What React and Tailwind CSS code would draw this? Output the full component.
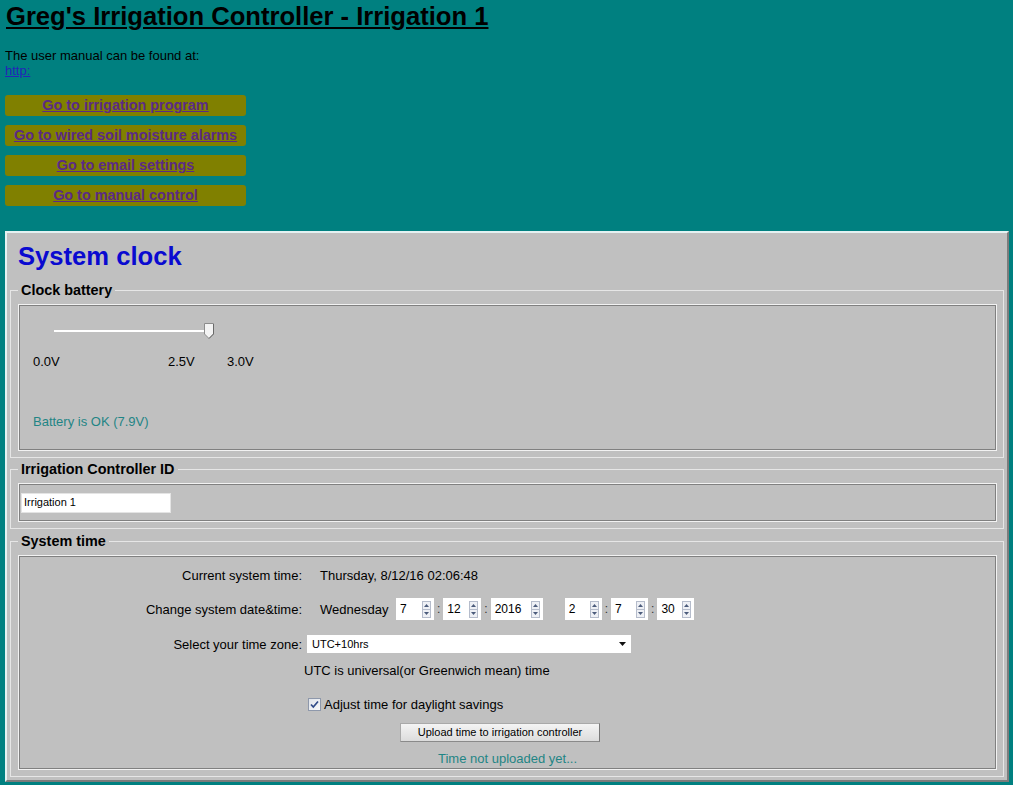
import React from 'react';

const navLinks = [
  'Go to irrigation program',
  'Go to wired soil moisture alarms',
  'Go to email settings',
  'Go to manual control',
];

const Arrow = ({ up }) => (
  <svg width="5" height="3" viewBox="0 0 5 3">
    <path d={up ? 'M2.5 0 L5 3 H0 Z' : 'M0 0 H5 L2.5 3 Z'} fill="#4b5b7b" />
  </svg>
);

const Spin = ({ value, w }) => (
  <div className={`flex h-[22px] items-center bg-white ${w}`}>
    <span className="flex-1 pl-[4px] text-[12px] leading-none text-black">{value}</span>
    <div className="mr-[3px] flex h-[17px] w-[9px] flex-col border border-[#b5bccb] bg-[#eef0f5]">
      <div className="flex flex-1 items-center justify-center border-b border-[#b5bccb]">
        <Arrow up />
      </div>
      <div className="flex flex-1 items-center justify-center">
        <Arrow />
      </div>
    </div>
  </div>
);

const Colon = () => <span className="mx-[3px] text-[12px] text-[#333]">:</span>;

const Group = ({ title, children, className }) => (
  <fieldset className={`mx-[3px] border border-[#e6e6e6] pr-[7px] pb-[7px] pl-[8px] ${className}`}>
    <legend className="-ml-[1px] px-[3px] text-[14.4px] font-bold leading-[17px] text-black">{title}</legend>
    {children}
  </fieldset>
);

const Box = ({ h, children }) => (
  <div className={`mt-[6px] border border-[#808080] shadow-[0_0_0_1px_#f2f2f2] ${h}`}>{children}</div>
);

export default function App() {
  return (
    <div className="min-h-screen bg-[#008080] pt-[2px] pr-[4px] pb-[2px] pl-[5px] font-['Liberation_Sans',Arial,sans-serif] text-[13px] leading-[15px] text-black">
      <h1 className="ml-[1px] text-[25.6px] font-bold leading-[29px] underline">
        Greg's Irrigation Controller - Irrigation 1
      </h1>
      <p className="mt-[17px]">
        The user manual can be found at:
        <br />
        <a href="#" className="text-[#2424b8] underline">http:</a>
      </p>

      <div className="mt-[17px] flex w-[241px] flex-col gap-[9px]">
        {navLinks.map((t) => (
          <div key={t} className="flex h-[21px] items-center justify-center rounded-[3px] bg-[#808000]">
            <a href="#" className="text-[14.4px] font-bold leading-[17px] text-[#5b2a86] underline">{t}</a>
          </div>
        ))}
      </div>

      <div className="mt-[25px] border-2 border-t-[#e4f2f2] border-r-[#7c7c7c] border-b-[#7c7c7c] border-l-[#e4f2f2] bg-[#c0c0c0] pt-[9px] pb-[3px]">
        <h2 className="ml-[11px] text-[25.6px] font-bold leading-[29px] text-[#0a0ad0]">System clock</h2>

        <Group title="Clock battery" className="mt-[11px]">
          <Box h="h-[145px]">
            <div className="mt-[16px] flex h-[18px] items-center">
              <div className="ml-[34px] h-[2px] w-[150px] bg-white" />
              <svg width="12" height="18" viewBox="0 0 12 18" className="-ml-[1px]">
                <path d="M1.5 1.5 H10.5 V12 L6 16.5 L1.5 12 Z" fill="#f3f3f3" stroke="#8c8c8c" />
                <path d="M10.5 2 V12 L6 16.5" fill="none" stroke="#6a6a6a" />
              </svg>
            </div>
            <div className="mt-[14px] ml-[13px] flex">
              <span className="w-[135px]">0.0V</span>
              <span className="w-[59px]">2.5V</span>
              <span>3.0V</span>
            </div>
            <div className="mt-[45px] ml-[13px] text-[#1f8585]">Battery is OK (7.9V)</div>
          </Box>
        </Group>

        <Group title="Irrigation Controller ID" className="mt-[3px]">
          <Box h="h-[37px] flex items-center">
            <div className="ml-[1px] flex h-[20px] w-[150px] items-center bg-white pl-[3px] text-[11px] shadow-[inset_0_0_0_1px_#e4e4e4]">
              Irrigation 1
            </div>
          </Box>
        </Group>

        <Group title="System time" className="mt-[4px]">
          <Box h="h-[213px]">
            <div className="mt-[8px] flex h-[20px] items-center">
              <span className="w-[282px] text-right">Current system time:</span>
              <span className="ml-[18px]">Thursday, 8/12/16 02:06:48</span>
            </div>
            <div className="mt-[13px] flex h-[22px] items-center">
              <span className="w-[282px] text-right">Change system date&amp;time:</span>
              <span className="ml-[18px] w-[76px]">Wednesday</span>
              <Spin value="7" w="w-[38px]" />
              <Colon />
              <Spin value="12" w="w-[38px]" />
              <Colon />
              <Spin value="2016" w="w-[52px]" />
              <div className="w-[22px]" />
              <Spin value="2" w="w-[37px]" />
              <Colon />
              <Spin value="7" w="w-[37px]" />
              <Colon />
              <Spin value="30" w="w-[37px]" />
            </div>
            <div className="mt-[15px] flex h-[18px] items-center">
              <span className="w-[282px] text-right">Select your time zone:</span>
              <div className="ml-[5px] flex h-[18px] w-[324px] items-center justify-between bg-white pr-[4px] pl-[5px] text-[11px]">
                <span>UTC+10hrs</span>
                <svg width="8" height="5" viewBox="0 0 8 5">
                  <path d="M0 0 H7 L3.5 4 Z" fill="#111" />
                </svg>
              </div>
            </div>
            <div className="mt-[10px] pl-[284px]">UTC is universal(or Greenwich mean) time</div>
            <div className="mt-[19px] flex h-[15px] items-center pl-[288px]">
              <svg width="13" height="13" viewBox="0 0 13 13">
                <defs>
                  <linearGradient id="cb" x1="0" y1="0" x2="1" y2="1">
                    <stop offset="0" stopColor="#dfe3ea" />
                    <stop offset="1" stopColor="#f7f8fa" />
                  </linearGradient>
                </defs>
                <rect x="0.5" y="0.5" width="12" height="12" fill="url(#cb)" stroke="#8e98ab" />
                <path d="M3 6.5 L5.3 9 L10 3.5" fill="none" stroke="#2f4a88" strokeWidth="1.7" />
              </svg>
              <span className="ml-[3px]">Adjust time for daylight savings</span>
            </div>
            <div className="mt-[11px] pl-[380px]">
              <div className="flex h-[19px] w-[200px] items-center justify-center border border-[#a9a9a9] border-r-[#777] border-b-[#8a8a8a] bg-gradient-to-b from-[#f4f4f4] to-[#dcdcdc] text-[11px]">
                Upload time to irrigation controller
              </div>
            </div>
            <div className="mt-[9px] text-center text-[#1f8585]">Time not uploaded yet...</div>
          </Box>
        </Group>
      </div>
    </div>
  );
}
